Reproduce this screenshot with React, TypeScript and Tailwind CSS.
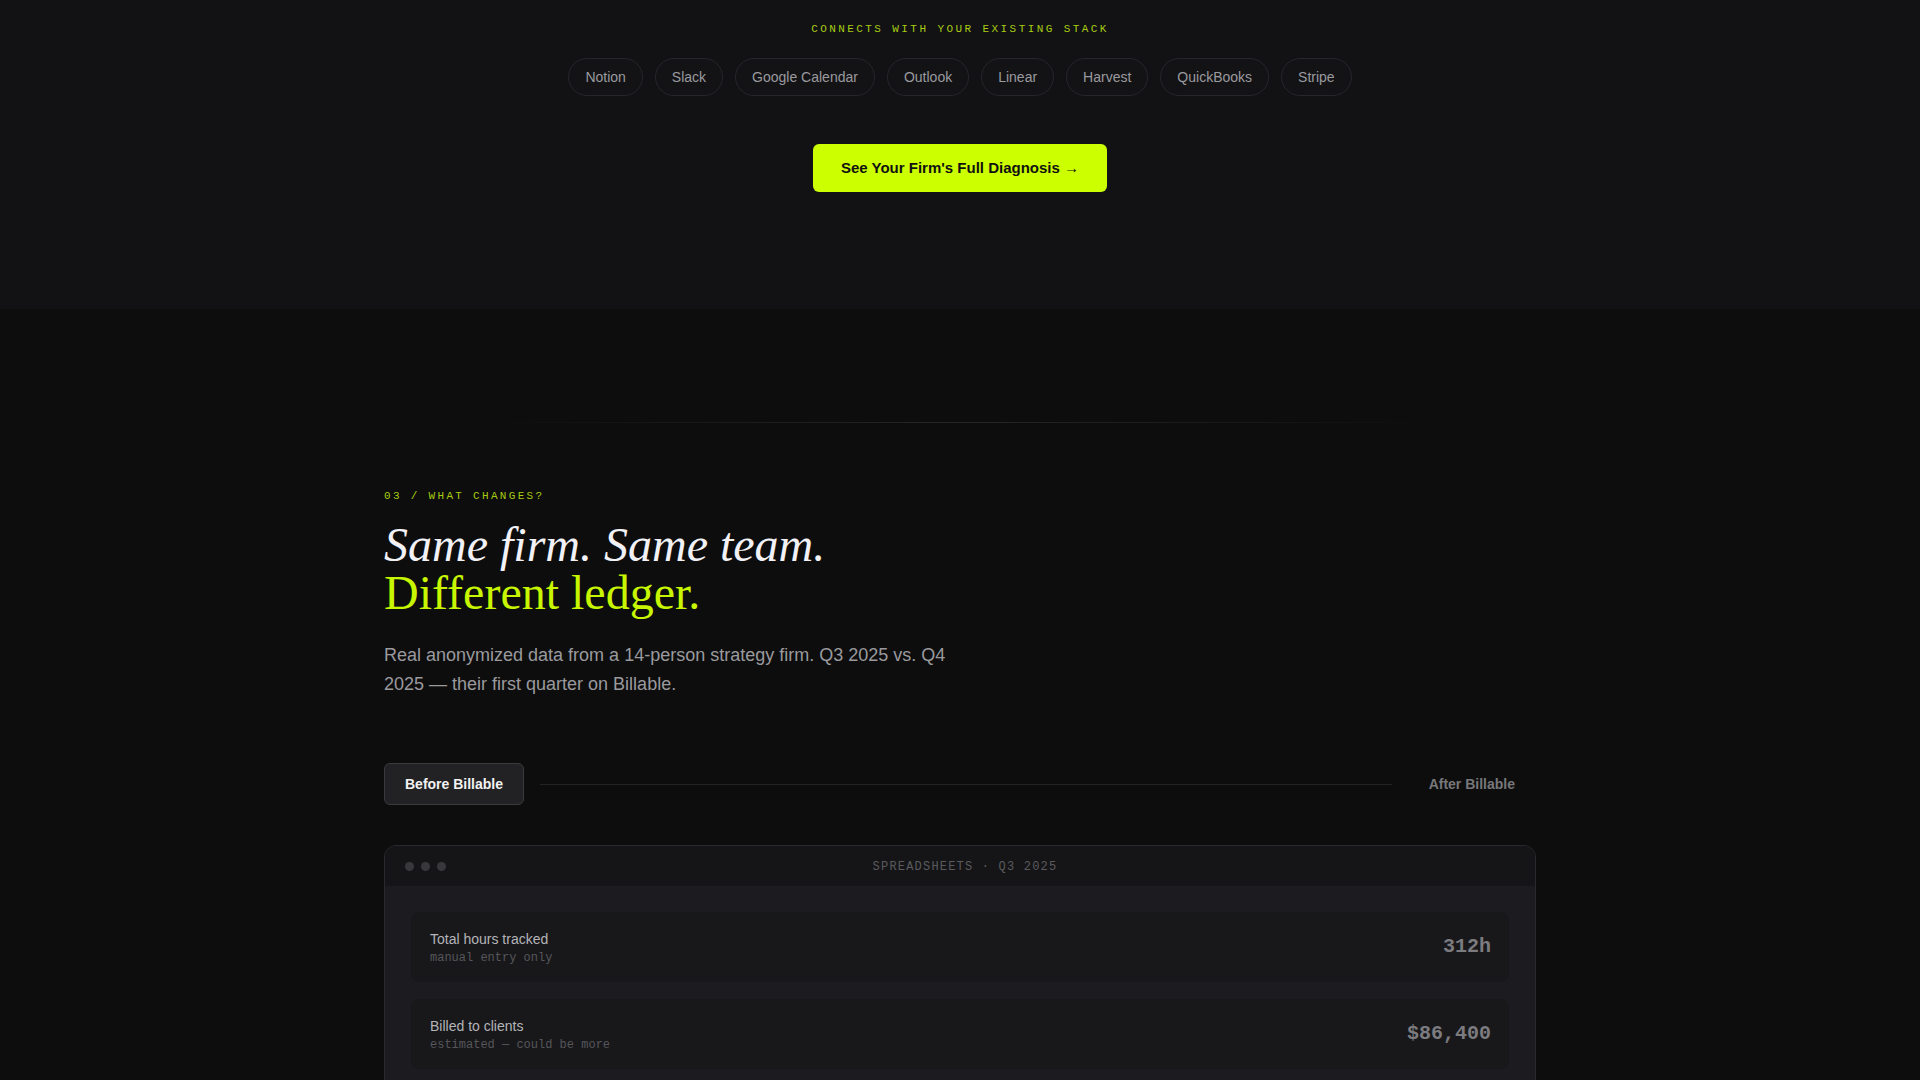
import React, { useState } from 'react';

const integrations = ['Notion', 'Slack', 'Google Calendar', 'Outlook', 'Linear', 'Harvest', 'QuickBooks', 'Stripe'];

const beforeRows = [
  { label: 'Total hours tracked', note: 'manual entry only', value: '312h' },
  { label: 'Billed to clients', note: 'estimated — could be more', value: '$86,400' },
];

const sans = { fontFamily: '"Liberation Sans", Arial, sans-serif' };

export default function App() {
  const [mode, setMode] = useState<'before' | 'after'>('before');

  return (
    <div className="min-h-screen bg-[#0d0d0d] font-['Liberation_Sans',Arial,sans-serif]" style={sans}>
      {/* Integrations + CTA */}
      <section className="bg-[#121215] pt-[21px] pb-[117px]">
        <div className="flex flex-col items-center">
          <p className="font-['Liberation_Mono',monospace] text-[11px] leading-4 tracking-[0.22em] text-[#a8cc12] uppercase">
            Connects with your existing stack
          </p>
          <div className="mt-[21px] flex items-center gap-3">
            {integrations.map((name) => (
              <span
                key={name}
                className="h-[38px] flex items-center px-4 rounded-full border border-[#26262b] bg-[#131316] text-[14px] text-[#9a9a9e]"
              >
                {name}
              </span>
            ))}
          </div>
          <a
            href="#"
            className="mt-[48px] h-[48px] flex items-center px-7 rounded-md bg-[#ccff00] text-[15px] font-bold text-[#111111]"
          >
            See Your Firm's Full Diagnosis →
          </a>
        </div>
      </section>

      {/* What changes */}
      <section className="pt-[113px] pb-20">
        <div className="max-w-6xl mx-auto">
          <div className="mx-auto h-px w-[960px] bg-gradient-to-r from-transparent via-[#26262a] to-transparent" />

          <p className="mt-[65px] font-['Liberation_Mono',monospace] text-[11px] leading-4 tracking-[0.21em] text-[#a8cc12] uppercase">
            03 / What changes?
          </p>
          <h2 className="mt-[17px] font-['Liberation_Serif','Times_New_Roman',serif] text-[48px] leading-[48px] font-normal">
            <span className="block italic text-[#f1f1f6]">Same firm. Same team.</span>
            <span className="block text-[#c8f500]">Different ledger.</span>
          </h2>
          <p className="mt-6 max-w-xl text-[18px] leading-[28.5px] text-[#9a9a9e]">
            Real anonymized data from a 14-person strategy firm. Q3 2025 vs. Q4 2025 — their first quarter on Billable.
          </p>

          {/* Toggle */}
          <div className="mt-[65px] flex items-center gap-4">
            <button
              onClick={() => setMode('before')}
              className={
                mode === 'before'
                  ? 'h-[42px] px-5 rounded-md border border-[#3a3a3e] bg-[#222224] text-[14px] font-bold text-[#f2f2f2]'
                  : 'h-[42px] px-5 rounded-md border border-transparent text-[14px] font-bold text-[#77777a]'
              }
            >
              Before Billable
            </button>
            <div className="flex-1 h-px bg-[#232326]" />
            <button
              onClick={() => setMode('after')}
              className={
                mode === 'after'
                  ? 'h-[42px] px-5 rounded-md border border-[#3a3a3e] bg-[#222224] text-[14px] font-bold text-[#f2f2f2]'
                  : 'h-[42px] px-5 rounded-md border border-transparent text-[14px] font-bold text-[#77777a]'
              }
            >
              After Billable
            </button>
          </div>

          {/* Window card */}
          <div className="mt-10 rounded-xl border border-[#2a2a2e] overflow-hidden bg-[#1c1c20]">
            <div className="relative h-[40px] flex items-center pl-5 bg-[#151517]">
              <div className="flex items-center gap-[7px] pt-[1px]">
                <span className="w-[9px] h-[9px] rounded-full bg-[#38383c]" />
                <span className="w-[9px] h-[9px] rounded-full bg-[#38383c]" />
                <span className="w-[9px] h-[9px] rounded-full bg-[#38383c]" />
              </div>
              <span className="absolute left-[calc(50%+5px)] -translate-x-1/2 pt-[1px] font-['Liberation_Mono',monospace] text-[12px] tracking-[0.1em] text-[#5a5a5e] uppercase">
                Spreadsheets · Q3 2025
              </span>
            </div>
            <div className="px-[26px] pt-[26px] pb-6 flex flex-col gap-[17px]">
              {beforeRows.map((row) => (
                <div key={row.label} className="h-[70px] flex items-center justify-between pl-[19px] pr-[18px] rounded-lg bg-[#18181b]">
                  <div className="flex flex-col">
                    <span className="text-[14px] leading-5 text-[#b4b4b8]">{row.label}</span>
                    <span className="mt-[1px] font-['Liberation_Mono',monospace] text-[12px] leading-4 text-[#56565a]">
                      {row.note}
                    </span>
                  </div>
                  <span className="font-['Liberation_Mono',monospace] text-[20px] font-bold text-[#7c7c80]">
                    {row.value}
                  </span>
                </div>
              ))}
            </div>
          </div>
        </div>
      </section>
    </div>
  );
}
